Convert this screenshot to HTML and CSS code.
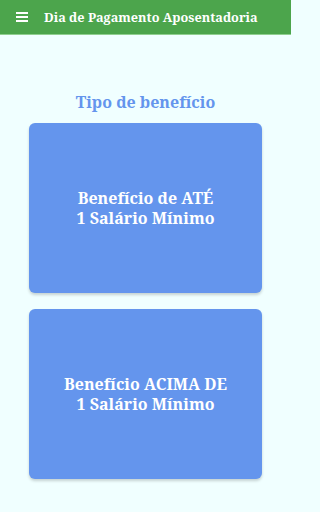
FILE: index.html
```html
<!DOCTYPE html>
<html lang="pt">
<head>
<meta charset="utf-8">
<link rel="stylesheet" href="styles.css">
</head>
<body>
<header class="appbar">
  <svg class="menu" width="12" height="10" viewBox="0 0 12 10"><rect x="0" y="0" width="12" height="2" fill="#fff"/><rect x="0" y="4" width="12" height="2" fill="#fff"/><rect x="0" y="8" width="12" height="2" fill="#fff"/></svg>
  <span class="apptitle">Dia de Pagamento Aposentadoria</span>
</header>
<main class="content">
  <h1 class="heading">Tipo de benefício</h1>
  <div class="card"><span>Benefício de ATÉ<br>1 Salário Mínimo</span></div>
  <div class="card"><span>Benefício ACIMA DE<br>1 Salário Mínimo</span></div>
</main>
</body>
</html>
```
FILE: styles.css
```css
html, body { margin: 0; padding: 0; }
html { background: #f0ffff; }
body {
  width: 291px;
  height: 512px;
  background: #f0ffff;
  font-family: "Noto Serif", "DejaVu Serif", "Liberation Serif", serif;
  overflow: hidden;
}
.appbar {
  height: 34px;
  background: #4ca54c;
  border-bottom: 1px solid #8fcf8f;
  display: flex;
  align-items: center;
  padding-left: 16px;
  gap: 16px;
}
.menu { flex: none; }
.apptitle {
  color: #fff;
  font-weight: bold;
  font-size: 12.7px;
  white-space: nowrap;
}
.content {
  display: flex;
  flex-direction: column;
  align-items: center;
  padding: 56px 29px 0;
}
.heading {
  margin: 0;
  height: 33px;
  color: #6495ed;
  font-size: 16px;
  font-weight: bold;
  line-height: 24px;
  margin-top: -1px;
}
.card {
  box-sizing: border-box;
  width: 233px;
  height: 170px;
  background: #6495ed;
  border-radius: 6px;
  box-shadow: 0 2px 3px rgba(0,0,0,0.18);
  display: flex;
  align-items: center;
  justify-content: center;
  text-align: center;
  color: #fff;
  font-weight: bold;
  font-size: 16px;
  line-height: 20px;
  margin-bottom: 16px;
}
```
